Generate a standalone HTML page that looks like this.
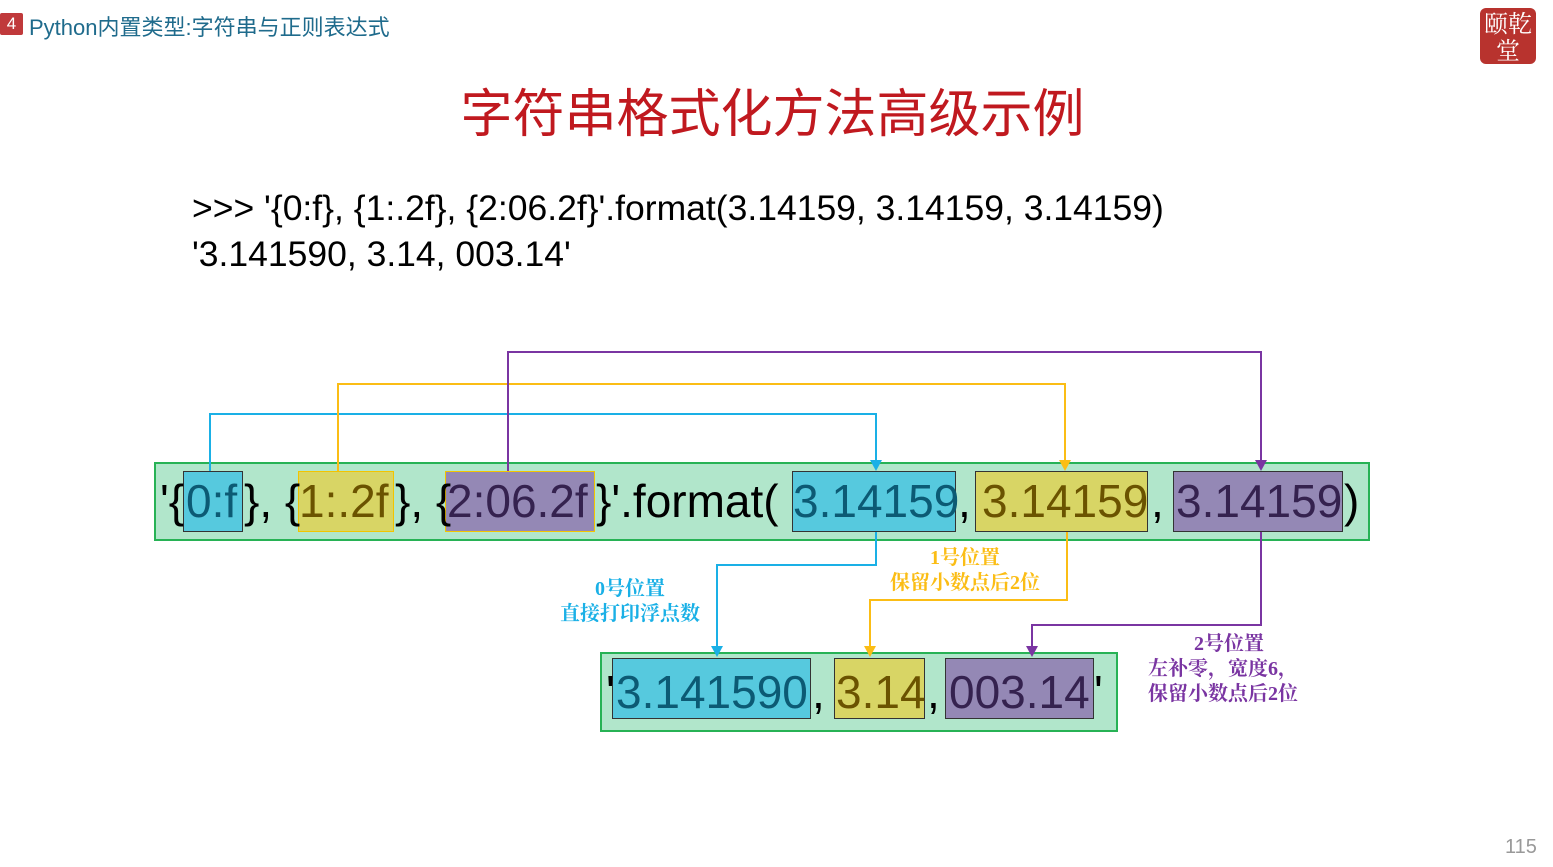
<!DOCTYPE html>
<html><head><meta charset="utf-8"><style>
body{margin:0;width:1553px;height:867px;background:#fff;position:relative;overflow:hidden;font-family:"Liberation Sans","Noto Sans CJK SC",sans-serif}
.a{position:absolute;white-space:nowrap}
.b{position:absolute;box-sizing:border-box}
.t{position:absolute;white-space:nowrap;font-size:46px;line-height:60px;top:471px}
.t2{position:absolute;white-space:nowrap;font-size:46px;line-height:60px;top:662px}
.lab{position:absolute;white-space:nowrap;font-family:"Liberation Serif","Noto Serif CJK SC",serif;font-weight:bold;font-size:20px;line-height:25px;text-align:center}
</style></head><body>
<div class="a" style="left:0;top:13px;width:23px;height:22px;background:#c0393b;color:#fff;font-size:17px;text-align:center;line-height:22px;border-radius:2px">4</div>
<div class="a" style="left:29px;top:10px;font-size:22px;color:#1f6b8c">Python内置类型:字符串与正则表达式</div>
<div class="a" style="left:1480px;top:8px;width:56px;height:56px;background:#b8332e;border-radius:6px;color:#fff;font-size:24px;line-height:27px;text-align:center;font-family:'Noto Serif CJK SC',serif">颐乾<br>堂</div>
<div class="a" style="left:-4px;width:1553px;top:72px;text-align:center;font-size:52px;color:#c0191f">字符串格式化方法高级示例</div>
<div class="a" style="left:192px;top:185px;font-size:35.5px;line-height:46px;color:#000">&gt;&gt;&gt; '{0:f}, {1:.2f}, {2:06.2f}'.format(3.14159, 3.14159, 3.14159)<br>'3.141590, 3.14, 003.14'</div>

<div class="b" style="left:154px;top:462px;width:1216px;height:79px;background:#b1e6cb;border:2px solid #27b255"></div>
<div class="b" style="left:183px;top:471px;width:60px;height:61px;background:#56c9de;border:1px solid #333"></div>
<div class="b" style="left:298px;top:471px;width:96px;height:61px;background:#d8d565;border:1px solid #f2c400"></div>
<div class="b" style="left:445px;top:471px;width:150px;height:61px;background:#9488b5;border:1px solid #f2c400"></div>
<div class="b" style="left:792px;top:471px;width:164px;height:61px;background:#56c9de;border:1px solid #333"></div>
<div class="b" style="left:975px;top:471px;width:173px;height:61px;background:#d8d565;border:1px solid #333"></div>
<div class="b" style="left:1173px;top:471px;width:170px;height:61px;background:#9488b5;border:1px solid #333"></div>
<div class="t" style="left:160px">'{</div>
<div class="t" style="left:186px;color:#0c5a74">0:f</div>
<div class="t" style="left:244px">}, {</div>
<div class="t" style="left:299px;color:#6b5300">1:.2f</div>
<div class="t" style="left:395px">}, {</div>
<div class="t" style="left:447px;color:#35224f">2:06.2f</div>
<div class="t" style="left:596px">}'.format(</div>
<div class="t" style="left:793px;color:#0c5a74">3.14159</div>
<div class="t" style="left:958px">,</div>
<div class="t" style="left:982px;color:#6b5300">3.14159</div>
<div class="t" style="left:1151px">,</div>
<div class="t" style="left:1176px;color:#35224f">3.14159</div>
<div class="t" style="left:1344px">)</div>

<div class="b" style="left:600px;top:652px;width:518px;height:80px;background:#b1e6cb;border:2px solid #27b255"></div>
<div class="b" style="left:612px;top:658px;width:199px;height:61px;background:#56c9de;border:1px solid #333"></div>
<div class="b" style="left:834px;top:658px;width:91px;height:61px;background:#d8d565;border:1px solid #333"></div>
<div class="b" style="left:945px;top:658px;width:149px;height:61px;background:#9488b5;border:1px solid #333"></div>
<div class="t2" style="left:606px">'</div>
<div class="t2" style="left:616px;color:#0c5a74">3.141590</div>
<div class="t2" style="left:812px">,</div>
<div class="t2" style="left:836px;color:#6b5300">3.14</div>
<div class="t2" style="left:927px">,</div>
<div class="t2" style="left:949px;color:#35224f">003.14</div>
<div class="t2" style="left:1094px">'</div>

<svg class="a" style="left:0;top:0" width="1553" height="867">
<g fill="none" stroke-width="2">
<polyline stroke="#1ab0e6" points="210,471 210,414 876,414 876,462"/>
<polyline stroke="#fbbd15" points="338,471 338,384 1065,384 1065,462"/>
<polyline stroke="#7a35a2" points="508,471 508,352 1261,352 1261,462"/>
<polyline stroke="#1ab0e6" points="876,532 876,565 717,565 717,648"/>
<polyline stroke="#fbbd15" points="1067,532 1067,600 870,600 870,648"/>
<polyline stroke="#7a35a2" points="1261,532 1261,625 1032,625 1032,648"/>
</g>
<polygon fill="#1ab0e6" points="870,460 882,460 876,471"/>
<polygon fill="#fbbd15" points="1059,460 1071,460 1065,471"/>
<polygon fill="#7a35a2" points="1255,460 1267,460 1261,471"/>
<polygon fill="#1ab0e6" points="711,646 723,646 717,657"/>
<polygon fill="#fbbd15" points="864,646 876,646 870,657"/>
<polygon fill="#7a35a2" points="1026,646 1038,646 1032,657"/>
</svg>
<div class="lab" style="left:545px;width:170px;top:577px;color:#1ab0e6">0号位置<br>直接打印浮点数</div>
<div class="lab" style="left:875px;width:180px;top:546px;color:#fbbd15">1号位置<br>保留小数点后2位</div>
<div class="lab" style="left:1148px;width:162px;top:632px;color:#7a35a2">2号位置<br><span style="display:block;text-align:left">左补零，宽度6，<br>保留小数点后2位</span></div>
<div class="a" style="left:1505px;top:836px;font-size:20px;color:#999">115</div>
</body></html>
